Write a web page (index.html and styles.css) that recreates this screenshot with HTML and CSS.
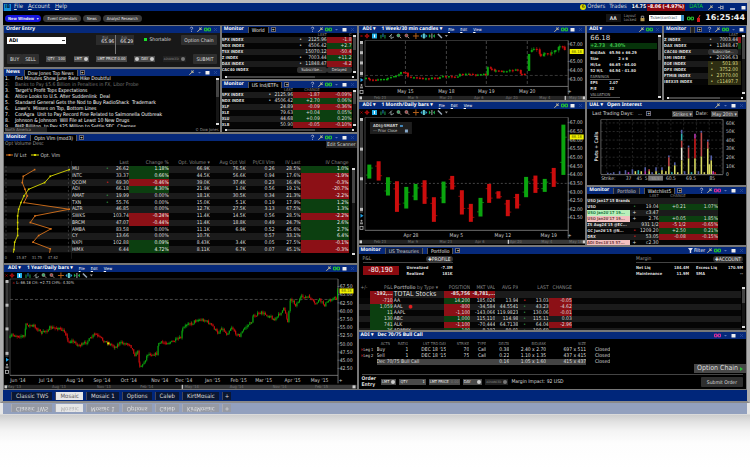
FILE: index.html
```html
<!DOCTYPE html>
<html lang="en">
<head>
<meta charset="utf-8">
<title>Mosaic</title>
<link rel="stylesheet" href="styles.css">
</head>
<body>
<div class="window">
  <header class="titlebar">
    <span class="logo">IB</span>
    <nav class="menu"><a href="#"><u>F</u>ile</a><a href="#"><u>A</u>ccount</a><a href="#"><u>H</u>elp</a></nav>
    <div class="status">
      <span class="count">6</span><a href="#">Orders</a><a href="#">Trades</a>
      <span class="pl"><b>14.75</b><b class="loss">-8.06 (-4.97%)</b></span>
      <span class="data">DATA</span>
      <span class="tools" data-tools="w p n m"></span>
    </div>
  </header>
  <div class="toolbar">
    <button class="pill primary">New Window &nbsp;▾</button><button class="pill">Event Calendars</button><button class="pill">News</button><button class="pill">Analyst Research</button>
    <div class="toolbar-right">
      <button class="aa">AA</button>
      <span class="layout">Layout<br>Locked</span>
      <span class="tools" data-tools="k"></span>
      <input class="search" aria-label="Ticker or contract" value="Ticker/contract">
      <span class="tools" data-tools="l a"></span>
      <time class="clock">16:25:44</time>
    </div>
  </div>

  <main class="workspace">
    <div class="col">
      <div class="split entry-row">
        <div class="col">
          <section class="panel order">
            <div class="head"><h2>Order Entry</h2><span class="tools" data-tools="q w l x"></span></div>
            <div class="body order-body">
              <div class="line">
                <select class="symbol" aria-label="Symbol"><option>ADI</option></select>
                <div class="quote"><span><i>Bid</i>65.96</span><span><i>Ask</i>66.29</span></div>
                <span class="short"><i></i>Shortable</span>
                <button class="btn">Option Chain</button>
              </div>
              <div class="line low">
                <span class="side"><button class="btn">BUY</button><button class="btn">SELL</button></span>
                <button class="chip">QTY &nbsp; 100</button><button class="chip">LMT <i></i></button><button class="chip">LMT PRICE 0.00</button><button class="chip"><i></i> DAY <i></i></button><button class="chip tiny">ADVANCED <i></i></button>
                <button class="btn">SUBMIT</button>
              </div>
            </div>
          </section>
          <section class="panel grow">
            <div class="head"><h2>News</h2><button class="tab on">Dow Jones Top News</button><button class="plus">+</button><span class="tools" data-tools="w d m x"></span></div>
            <div class="body scroller news-body">
              <ol class="news">
                <li>Fed Minutes Show June Rate Hike Doubtful</li>
                <li class="read">Banks to Pay $5.6 Billion in Penalties in FX, Libor Probe</li>
                <li>Target's Profit Tops Expectations</li>
                <li>Altice Looks to U.S. After Suddenlink&nbsp; Deal</li>
                <li>Standard General Gets the Nod to Buy RadioShack&nbsp; Trademark</li>
                <li>Lowe's&nbsp; Misses on Top, Bottom Lines</li>
                <li>ConAgra&nbsp; Unit to Pay Record Fine Related to Salmonella Outbreak</li>
                <li>Johnson &amp; Johnson&nbsp; Will File at Least 10 New Drugs</li>
                <li>BHP Billiton&nbsp; to Pay $25 Million to Settle SEC&nbsp; Charges</li>
              </ol>
              <div class="vbar"></div>
            </div>
            <div class="newsfoot"><select aria-label="Region"><option>North America</option></select><span>© Dow Jones</span></div>
          </section>
        </div>
        <div class="col">
          <section class="panel world">
            <div class="head"><h2>Monitor</h2><button class="tab on">World</button><button class="plus">+</button><span class="tools" data-tools="q w l d m x"></span></div>
            <div class="body scroller"><table id="world" class="small"></table><div class="vbar"></div></div>
            <div class="hbar"></div>
          </section>
          <section class="panel grow">
            <div class="head"><h2>Monitor</h2><button class="tab on">US Ind/ETFs</button><button class="plus">+</button><span class="tools" data-tools="q w l d m x"></span></div>
            <div class="body scroller"><table id="us" class="small"></table><div class="vbar"></div></div>
            <div class="hbar"></div>
          </section>
        </div>
      </div>

      <section class="panel scan">
        <div class="head"><h2>Monitor</h2><button class="tab on">Optn Vlm (mod3)</button><button class="plus">+</button><span class="tools" data-tools="q w l d m x"></span></div>
        <div class="scan-top"><span>Opt Volume Desc</span><button class="edit">Edit Scanner</button></div>
        <div class="body scan-body">
          <svg id="scanChart" viewBox="4 149 68 114"></svg>
          <div class="scroller"><table id="scan"></table><div class="vbar"></div></div>
        </div>
      </section>

      <section class="panel grow">
        <div class="head chart-head"><h2>ADI ▾</h2><h2>1 Year/Daily bars ▾</h2><a href="#"><u>F</u>ile</a><a href="#"><u>E</u>dit</a><a href="#"><u>V</u>iew</a><span class="tools" data-tools="w l m x"></span></div>
        <svg id="year" viewBox="4 272 353 117"></svg>
      </section>
    </div>

    <div class="col">
      <div class="split market-row">
        <div class="col">
          <section class="panel top">
            <div class="head chart-head"><h2>ADI ▾</h2><h2>1 Week/30 min candles ▾</h2><a href="#"><u>F</u>ile</a><a href="#"><u>E</u>dit</a><a href="#"><u>V</u>iew</a><span class="tools" data-tools="w l m x"></span></div>
            <svg id="week" viewBox="359 33 227 67"></svg>
          </section>
          <section class="panel grow">
            <div class="head chart-head"><h2>ADI ▾</h2><h2>1 Month/Daily bars ▾</h2><a href="#"><u>F</u>ile</a><a href="#"><u>E</u>dit</a><a href="#"><u>V</u>iew</a><span class="tools" data-tools="w l m x"></span></div>
            <svg id="month" viewBox="359 109 227 136"></svg>
          </section>
        </div>
        <div class="col">
          <div class="split quote-row top">
            <section class="panel">
              <div class="head"><h2>ADI ▾</h2><span class="tools" data-tools="w l x"></span></div>
              <div class="body scroller">
                <dl class="facts">
                  <div class="price">66.18</div>
                  <div class="gain">+2.73 &nbsp; 4.30%</div>
                  <div><dt>Bid/Ask</dt><dd>65.96 x 66.29</dd></div>
                  <div><dt>Size</dt><dd class="mid">2 x 6</dd></div>
                  <div><dt>Hi/Lo</dt><dd>66.65 - 64.00</dd></div>
                  <div><dt>52 H/L</dt><dd>64.94 - 41.80</dd></div>
                  <div class="sub">EARNINGS</div>
                  <div><dt>EPS</dt><dd>2.07</dd></div>
                  <div><dt>P/E</dt><dd>32</dd></div>
                  <div class="sub">VALUATION</div>
                </dl>
                <div class="vbar"></div>
              </div>
            </section>
            <section class="panel">
              <div class="head"><h2>Monitor</h2><button class="tab on slim" aria-label="Tab"></button><button class="plus">+</button><span class="tools" data-tools="q w l d m"></span></div>
              <div class="body scroller"><table id="index" class="small"></table><div class="vbar"></div></div>
              <div class="hbar"></div>
            </section>
          </div>
          <section class="panel oi">
            <div class="head"><h2>UAL ▾</h2><h2>Open Interest</h2><span class="tools" data-tools="w d m x"></span></div>
            <div class="oi-bar"><span>Last Trading Days: &nbsp; ...</span><button class="plus">+</button><span class="picks"><select aria-label="View"><option>Strikes ▾</option></select><label for="date">Date:</label><select id="date"><option>May 20th ▾</option></select></span></div>
            <svg id="open" viewBox="588 117 159 68"></svg>
          </section>
          <section class="panel grow">
            <div class="head"><h2>Monitor</h2><button class="tab">Portfolio</button><button class="tab on">Watchlist5</button><button class="plus">+</button><span class="tools" data-tools="q w L d m x"></span></div>
            <div class="body watch-body"><table id="watch" class="small"></table></div>
          </section>
        </div>
      </div>

      <section class="panel folio">
        <div class="head"><h2>Monitor</h2><button class="tab">US Treasuries</button><button class="tab on">Portfolio</button><button class="plus">+</button><span class="tools" data-tools="f w l d m x"></span></div>
        <div class="account">
          <div class="acct pnl">
            <div class="acct-head"><span>P&amp;L</span><button>✚PROFILE</button></div>
            <div class="acct-row"><strong>-80,190</strong><dl><dt>Unrealized</dt><dd>-7.3M</dd><dt>Realized</dt><dd>181K</dd></dl></div>
          </div>
          <div class="acct margin">
            <div class="acct-head"><span>Margin</span><button>✚ACCOUNT</button></div>
            <dl class="four"><dt>Net Liq</dt><dd>184.4M</dd><dt>Excess Liq</dt><dd>170.9M</dd><dt>Maintenance</dt><dd>11.9M</dd><dt>SMA</dt><dd>--</dd></dl>
          </div>
        </div>
        <div class="body scroller"><table id="folio"></table><div class="vbar"></div></div>
      </section>

      <section class="panel grow">
        <div class="head"><h2>ADI ▾</h2><h2>Dec 70/75 Bull Call</h2><span class="tools" data-tools="L d m x"></span></div>
        <div class="legs"><table id="legs"></table><button class="chain">Option Chain<i></i></button></div>
        <div class="submitrow">
          <b>Order<br>Entry</b>
          <button class="chip">LMT <i></i></button><button class="chip">QTY &nbsp; &nbsp; &nbsp; &nbsp; &nbsp; &nbsp; 1</button><button class="chip">LMT PRICE <s>0.00</s></button><button class="chip">DAY &nbsp; &nbsp; <i></i></button><button class="chip tiny">ADVANCED <i></i></button>
          <span>Margin Impact: 92 USD</span>
          <button class="btn">Submit Order</button>
        </div>
      </section>
    </div>
  </main>

  <nav class="pages">
    <button>Classic TWS</button><button class="on">Mosaic</button><button>Mosaic 1</button><button>Options</button><button>Caleb</button><button>KirtMosaic</button><button class="add">+</button>
  </nav>
</div>
<div class="reflection" aria-hidden="true"></div>
<script src="app.js"></script>
</body>
</html>
```
FILE: styles.css
```css
* { box-sizing: border-box; }
body {
  margin: 0;
  background: #fff;
  color: #ddd;
  font: 5px/6px "DejaVu Sans Condensed", "DejaVu Sans", sans-serif;
  text-rendering: geometricPrecision;
}
h2, dl, dd, ol { margin: 0; padding: 0; }
button, select, input {
  font: inherit;
  color: inherit;
  background: none;
  border: 0;
  margin: 0;
  padding: 0;
  appearance: none;
  white-space: nowrap;
}
a { color: inherit; text-decoration: none; }
svg { display: block; width: 100%; }
svg text { font-size: 5px; fill: #ccc; }

.window {
  border: 3px solid #aeaeae;
  border-top-color: #bcbcbc;
  border-bottom: 2px solid #8a8a8a;
  background: #000;
}
.titlebar {
  display: flex;
  align-items: center;
  height: 8px;
  background: #00267a;
  font-size: 6px;
  line-height: 8px;
}
.logo { background: #1590d8; color: #024; font-weight: bold; padding: 0 1px; margin: 0 3px 0 1px; font-size: 5px; line-height: 7px; }
.menu { display: flex; gap: 5px; }
.status { margin-left: auto; display: flex; align-items: center; gap: 4px; }
.count { width: 6px; height: 6px; border-radius: 3px; background: #dfe000; color: #000; font-size: 5px; line-height: 6px; text-align: center; margin-right: -3px; }
.pl { display: flex; font-size: 5px; color: #fff; }
.pl b { padding: 0 1px; line-height: 7px; background: #031b55; }
.pl .loss { background: #8f0a12; }
.data { color: #0ecb2c; }

.toolbar { display: flex; align-items: center; gap: 2px; height: 14px; padding: 0 2px; font-size: 4px; }
.pill { height: 7px; line-height: 7px; padding: 0 4px; border-radius: 4px; background: #3a3a3a; color: #eee; }
.pill.primary { background: #1616dd; font-weight: bold; padding: 0 3px; }
.toolbar-right { margin-left: auto; display: flex; align-items: center; gap: 3px; }
.aa { width: 15px; height: 8px; background: #151515; font-weight: bold; font-size: 5px; }
.layout { line-height: 4px; color: #999; }
.search { width: 35px; height: 6px; background: #fff; color: #345; padding: 0 1px; border-right: 3px solid #3b8fc0; }
.clock { font: bold 8px/10px "DejaVu Sans", sans-serif; color: #eee; }

.tools { margin-left: auto; display: flex; align-items: center; gap: 1px; }
.status .tools, .toolbar .tools { margin: 0; }
.status .tools { gap: 4px; }
.tools button { display: flex; height: 7px; line-height: 7px; }
.tools svg { width: 7px; height: 7px; }

.workspace {
  display: grid;
  grid-template-columns: 353fr 388fr;
  gap: 2px;
  padding: 1px;
  background: #777;
}
.col { display: flex; flex-direction: column; gap: 2px; min-width: 0; min-height: 0; }
.split { display: grid; gap: 2px; }
.entry-row { grid-template-columns: 216fr 135fr; height: 106px; }
.market-row { grid-template-columns: 227fr 159fr; grid-template-rows: 219px; }
.quote-row { grid-template-columns: 75fr 82fr; }
.panel { background: #000; overflow: hidden; display: flex; flex-direction: column; min-width: 0; min-height: 0; }
.grow { flex: 1; }
.top { height: 74px; flex: none; }
.order { height: 41px; }
.world { height: 53px; }
.scan { height: 129px; }
.oi { height: 83px; flex: none; }
.folio { height: 83px; }

.head { display: flex; align-items: center; gap: 4px; height: 7px; flex: none; padding: 0 1px 0 2px; background: #06297a; color: #fff; }
.head h2 { font: bold 5px/7px "Noto Sans", sans-serif; white-space: nowrap; }
.chart-head { padding-left: 4px; gap: 6px; font-size: 4px; }
.tab { height: 6px; line-height: 6px; padding: 0 3px; margin-top: 1px; background: #101c3c; border: solid #555; border-width: 0 1px; color: #ccc; font-size: 5px; }
.tab.on { background: #000; color: #eee; }
.tab.slim { width: 5px; padding: 0; background: #222; }
.plus { width: 5px; height: 5px; border: 1px solid #667; background: #000; color: #fff; font-size: 4px; line-height: 3px; margin-left: -2px; }

.body { flex: 1; min-height: 0; overflow: hidden; }
.scroller { display: flex; }
.scroller > :first-child { flex: 1; min-width: 0; }
.vbar { width: 3px; margin: 2px 1px; flex: none; background: linear-gradient(#ddd 2px, #444 2px 40%, #151515 40% calc(100% - 2px), #ddd calc(100% - 2px)); }
.hbar { height: 2px; flex: none; margin: 1px 3px; background: linear-gradient(90deg, #ddd 2px, #444 2px 70%, #151515 70% calc(100% - 2px), #ddd calc(100% - 2px)); }

.btn { height: 10px; padding: 0 3px; border-radius: 1px; background: #2f2f2f; }
.chip { display: inline-flex; align-items: center; gap: 2px; height: 6px; padding: 0 1px; background: #4a4a4a; color: #eee; font-size: 4px; }
.chip i { width: 4px; height: 4px; border-radius: 2px; background: #ccc; }
.chip.tiny { background: #222; color: #888; font-size: 3px; }
.chip.tiny i { background: #777; }
.chip s { color: #777; text-decoration: none; }
.order-body { background: #181818; padding: 2px 3px 3px; display: flex; flex-direction: column; justify-content: space-between; }
.line { display: flex; align-items: center; justify-content: space-between; }
.low { gap: 2px; }
.symbol { width: 59px; height: 7px; padding: 0 2px; color: #000; font-weight: bold; background: linear-gradient(#333, #333) 55px 3px / 3px 1px no-repeat, #fff; }
.quote { position: relative; display: flex; margin-left: 20px; background: #2b2b2b; }
.quote span { width: 19px; text-align: right; line-height: 5px; padding-right: 1px; color: #eee; }
.quote i { display: block; font-style: normal; font-size: 4px; line-height: 5px; color: #888; text-align: center; }
.quote::after { content: ""; position: absolute; left: 50%; top: 0; width: 1px; height: 19px; background: #777; }
.short i { display: inline-block; width: 3px; height: 3px; background: #1adf2a; margin-right: 2px; }
.side { display: flex; }

.news { list-style: none; counter-reset: n; line-height: 6px; white-space: nowrap; overflow: hidden; color: #fff; }
.news li { counter-increment: n; }
.news li::before { content: counter(n) "."; display: inline-block; width: 10px; padding-left: 1px; }
.news .read { color: #777; }
.newsfoot { display: flex; justify-content: space-between; height: 5px; line-height: 5px; padding: 0 1px; font-size: 4px; color: #999; }
.newsfoot select { width: 42px; height: 5px; background: #222; }

table { width: 100%; border-collapse: collapse; table-layout: fixed; line-height: 6px; }
.scroller > table { align-self: flex-start; }
th { font-weight: normal; color: #888; }
th, td { padding: 0; text-align: right; white-space: nowrap; overflow: hidden; height: 6px; }
tbody tr:nth-child(odd) { background: #1b1b1b; }
tbody tr:nth-child(even) { background: #050505; }
.l { text-align: left; }
.c { text-align: center; }
.g { background: #0c3f10; }
.r { background: #8c1016; }
.small th { height: 4px; line-height: 4px; font-size: 4px; }
.small .l { font-size: 4px; font-weight: bold; }
.mint { background: #b9f0bb; color: #274; }
.rose { background: #f4c0c0; color: #744; }
.olive { background: #2e2e12; color: #dd8; }
.box { background: #333; border-radius: 2px; text-align: center; font-size: 4px; }
.up { color: #3a9a4a; }
.down { color: #e02020; }

.scan-top { display: flex; justify-content: space-between; height: 7px; line-height: 7px; padding-left: 1px; color: #999; }
.edit { padding: 0 1px; background: #262626; color: #ddd; }
.scan-body { display: grid; grid-template-columns: 68fr 285fr; }
.scan-body .scroller { padding-top: 12px; }
#scan { height: 93px; }
#scan .g, #scan .r { color: #eee; }
.scan-body .vbar { margin: 8px 2px 8px 3px; }

.facts { padding-left: 3px; line-height: 6px; overflow: hidden; }
.facts div { display: flex; height: 6px; font-size: 4px; font-weight: bold; }
.facts dt { width: 19px; }
.facts .mid { padding-left: 9px; }
.facts .price { height: 9px; font: 7px/11px "DejaVu Sans", sans-serif; }
.facts .gain { background: #06330a; color: #3fbf4a; font-size: 5px; margin: 1px 0; }
.facts .sub { width: 30px; font-weight: normal; color: #aaa; border-bottom: 1px solid #555; }

.oi-bar { display: flex; align-items: center; gap: 6px; height: 9px; flex: none; padding: 0 8px 0 5px; }
.picks { margin-left: auto; display: flex; gap: 3px; }
.picks select { background: #444; padding: 0 1px; }
.watch-body { padding-right: 28px; }

.account { display: flex; justify-content: space-between; flex: none; height: 31px; padding: 2px 3px 0 4px; font-size: 4px; line-height: 6px; }
.pnl { width: 90px; }
.margin { width: 107px; }
.acct-head { display: flex; justify-content: space-between; height: 7px; border-bottom: 1px solid #444; color: #999; font-size: 5px; }
.acct-head button { height: 6px; line-height: 6px; background: #333; border-radius: 3px; padding: 0 2px; color: #eee; }
.acct-row { display: flex; justify-content: space-between; padding-top: 2px; }
.acct-row strong { width: 36px; height: 9px; margin-top: 1px; background: #8c0a10; color: #fff; font: 7px/9px "DejaVu Sans Condensed", sans-serif; text-align: center; }
.acct dl { display: grid; grid-template-columns: 32px 14px; font-weight: bold; }
.acct dd { text-align: right; }
.acct .four { grid-template-columns: 31fr 20fr 32fr 20fr; padding-top: 2px; }
.four dt:nth-of-type(even) { padding-left: 7px; }
#folio .l { padding-left: 1px; }
#folio .big td { font-size: 7px; height: 7px; line-height: 7px; }
#folio .big .r { font-size: 5px; font-weight: bold; }
#folio .sp { background: #000; }

.legs { position: relative; flex: none; padding: 2px 0 0 2px; height: 34px; }
#legs tr { background: none; }
#legs tr:last-child td:not(:last-child):not(:first-child) { background: #444; }
#legs th, #legs .leg { font-size: 4px; text-align: left; }
#legs th { text-align: right; }
.chain { position: absolute; right: 0; bottom: 0; height: 9px; padding: 0 3px; display: flex; align-items: center; gap: 2px; background: #484848; font: 7px/9px "DejaVu Sans Condensed", sans-serif; }
.chain i { border: solid transparent; border-width: 2px 0 2px 3px; border-left-color: #2fbf3a; }
.submitrow { display: flex; align-items: center; gap: 3px; margin: 1px 3px 0; border-top: 1px solid #444; height: 15px; line-height: 6px; }
.submitrow .btn { margin-left: auto; padding: 0 6px; }
.submitrow b { margin-right: 2px; }

.pages { display: flex; align-items: center; gap: 3px; height: 11px; padding-left: 8px; background: #00267a; font-size: 6px; }
.pages > * { height: 8px; line-height: 8px; padding: 0 4px; background: #0a1633; border-left: 1px solid #445; color: #ddd; }
.pages .on { background: #e6e6e6; color: #555; }
.pages .add { padding: 0 2px; }

.reflection { padding: 0 3px; height: 65px; background: linear-gradient(#e6e6e6 0, #e6e6e6 11px, #cdcdcd 12px, #e2e2e2 19px, #f4f4f4 28px, #fdfdfd 40px, #fff); }
.reflection .pages { transform: scaleY(-1); opacity: .36; filter: blur(.5px); }
```
FILE: app.js
```js
/* Toolbar glyphs, each drawn in a 7 x 7 box */
const glyphs = {
  q: ['Help', '<path d="M2.3 2.4Q2.5 1.2 3.6 1.2Q4.9 1.3 4.7 2.4Q3.6 3.3 3.5 4.3M3.5 5.2V6" stroke="#ccd" fill="none" stroke-width=".8"/>'],
  w: ['Settings', '<path d="M1.4 5.8L4.4 2.8M3.8 1.4L4 3.1L5.8 3.3M4.4 2.8L5.5 1.5" stroke="#ccc098" stroke-width="1" fill="none"/>'],
  l: ['Link group', '<path d="M.5 2.2H3V4.8H.5ZM4 2.2H6.5V4.8H4ZM2.5 3.5H4.5" stroke="#27c832" fill="none"/>'],
  L: ['Link group', '<path d="M.5 2.2H3V4.8H.5ZM4 2.2H6.5V4.8H4ZM2.5 3.5H4.5" stroke="#e0309a" fill="none"/>'],
  d: ['Menu', '<path d="M2 3H5L3.5 4.6Z" fill="#5d77b8"/>'],
  m: ['Maximize', '<path d="M1.5 2H5.5V5.5H1.5Z" fill="#eee"/>'],
  n: ['Minimize', '<path d="M1 5H6" stroke="#fff" stroke-width="1.2"/>'],
  x: ['Close', '<path d="M2 2L5 5M5 2L2 5" stroke="#31509b" stroke-width=".7"/>'],
  p: ['Pin', '<path d="M0 3.5H2M2.5 1.5V5.5M2.5 2.5H5V4.5H2.5M5 1.5V5.5" stroke="#8a94b0" fill="none"/>'],
  f: ['Filter', '<path d="M1 1H6L4.2 3.5V6H2.8V3.5Z" fill="#dde"/>', 'Filter'],
  k: ['Locked', '<path d="M1.5 3H5.5V6.2H1.5Z" fill="#b89a50"/><path d="M2.3 3V1.2H4.7V3" stroke="#aaa" fill="none" stroke-width=".8"/>'],
  a: ['Alerts', '<path d="M2 3H5V7H2Z" fill="#d01818"/><path d="M5 0L3.5 3" stroke="#e33"/>']
};
document.querySelectorAll('[data-tools]').forEach(el => {
  el.innerHTML = el.dataset.tools.split(' ').map(k =>
    `<button aria-label="${glyphs[k][0]}"><svg viewBox="0 0 7 7">${glyphs[k][1]}</svg>${glyphs[k][2] || ''}</button>`).join('');
});

/* Tables: a cell is "text|classes|colspan" */
function table(id, cols, head, rows) {
  const sum = cols.reduce((a, b) => a + b, 0);
  const cell = (tag, c) => { const [t, k, n] = c.split('|'); return `<${tag}${k ? ` class="${k}"` : ''}${n ? ` colspan="${n}"` : ''}>${t}</${tag}>`; };
  document.getElementById(id).innerHTML =
    '<colgroup>' + cols.map(w => `<col style="width:${(w / sum * 100).toFixed(2)}%">`).join('') + '</colgroup>' +
    '<thead><tr>' + head.map(c => cell('th', c)).join('') + '</tr></thead><tbody>' +
    rows.map(r => `<tr${r.big ? ' class="big"' : ''}>` + r.map(c => cell('td', c)).join('') + '</tr>').join('') + '</tbody>';
}
const D = '•|c', U = '•|c up', R = '•|c down';
table('world', [76, 7, 23, 25], ['', '', 'LAST', 'C'], [
  ['SPX INDEX|l', D, '2125.96', '-1.8|r'], ['NDX INDEX|l', D, '4506.42', '+2.7|g'],
  ['TSX INDEX|l', '', '15070.12', '-50.4|r'], ['Z INDEX|l', D, '7003.44', '+11.2|g'],
  ['DAX INDEX|l', D, '11848.47', '-4.2|r'], ['CAC40 INDEX|l', 'Subscribe...|box|2', 'Delayed|box']]);
table('us', [46, 5, 21, 27, 32], ['', '', 'LAST', 'CHANGE', ''], [
  ['SPX INDEX|l', D, '2125.96', '-1.87|r', '-0.09%|r'], ['NDX INDEX|l', D, '4506.42', '+2.70|g', '0.06%|g'],
  ['XLF|l', '', '24.89', '-0.09|r', '-0.36%|r'], ['XLE|l', '', '79.63', '+0.04|g', '0.05%|g'],
  ['XLU|l', '', '44.68', '+0.09|g', '0.20%|g'], ['XLB|l', '', '50.90', '-0.05|r', '-0.10%|r']]);
table('index', [44, 5, 25, 3], ['', '', 'LAST', ''], [
  ['Z INDEX|l', D, '7003.44', '|r'], ['DAX INDEX|l', D, '11848.47', '|g'], ['CAC40 INDEX|l', 'Subscribe...|box|2', ''],
  ['SMI INDEX|l', D, '20296.63', ''], ['EOE INDEX|l', '•|olive', '501.93|olive', '|olive'], ['DFX INDEX|l', '•|olive', '3752.00|olive', '|olive'],
  ['FTMIB INDEX|l', '•|olive', '23770.00|olive', '|olive'], ['IBEX35 INDEX|l', '•|olive', 'c11497.7|olive', '|olive']]);
table('watch', [43, 8, 20, 27, 32], ['', '', 'LAST', 'CHANGE', ''], [
  ["USO Jan17'15 Brands|l", '', '', '', ''], ['USO|l', U, '19.04', '+0.21|g', '1.07%|g'],
  ["USO Jan20'17 19...|l mint", '+|c', 'c3.47', '', ''], ["USO Jan20'17 19...|l rose", '+|c', '2.76', '+0.05|g', '1.85%|g'],
  ["ZS Aug24'15 @EC...|l", '', '931 1/2', '-5 1/2|r', '-0.65%|r'], ["GC Jun26'15 @N...|l", R, '1209.20', '+2.50|g', '0.21%|g'],
  ['DRX|l', R, '53.05', '-0.08|r', '-0.15%|r'], ["ADI Dec18'15 57...|l rose", '+|c', 'c2.30', '', '']]);
const scan = [
  ['MU', U, '26.62', '1.18%', '66.9K', '76.5K', '0.26', '28.5%', '1.0%'], ['INTC', '', '33.37', '0.66%', '44.5K', '56.6K', '0.94', '17.6%', '-1.9%'],
  ['QCOM', R, '69.30', '-0.46%', '39.0K', '37.4K', '0.23', '16.4%', '-0.3%'], ['ADI', '', '66.18', '4.30%', '21.9K', '1.0K', '0.56', '19.1%', '-20.7%'],
  ['AMAT', U, '19.99', '0.00%', '18.1K', '30.5K', '0.34', '21.3%', '-2.2%'], ['TXN', U, '55.76', '0.00%', '15.0K', '5.1K', '0.19', '17.9%', '1.2%'],
  ['ALTR', '', '46.85', '0.00%', '12.7K', '27.5K', '3.13', '67.5%', '1.3%'], ['SWKS', '', '103.74', '-0.24%', '11.4K', '14.5K', '0.56', '28.5%', '-2.2%'],
  ['BRCM', '', '47.07', '-0.44%', '11.4K', '18.8K', '0.49', '24.7%', '2.6%'], ['AMBA', '', '83.58', '0.00%', '11.1K', '6.9K', '0.52', '45.6%', '2.7%'],
  ['CY', '', '13.66', '0.00%', '10.7K', '', '0.57', '33.1%', '6.4%'], ['NXPI', '', '102.88', '0.09%', '8.43K', '3.4K', '0.05', '27.5%', '-0.1%'],
  ['HIMX', '', '6.44', '4.72%', '8.11K', '6.7K', '0.07', '45.1%', '-0.3%']];
const tone = v => v[0] === '-' ? v + '|r' : v === '0.00%' ? v : v + '|g';
table('scan', [33, 5, 19, 40, 41, 36, 29, 26, 48], ['', '', 'Last', 'Change %', 'Opt. Volume ▾', 'Avg Opt Vol', 'Pt/Cll Vlm', 'IV Last', 'IV Change'],
  scan.map(r => [r[0] + '|l', r[1], r[2], tone(r[3]), r[4], r[5], r[6], r[7], tone(r[8])]));
const total = ['|sp', '-192,...|r', 'TOTAL Stocks|l', '-85,756|r', '-8,781,...|r', '', '', '', '', ''];
total.big = true;
table('folio', [11, 23, 51, 26, 25, 23, 12, 18, 23, 168], ['+/-|c', 'P&amp;L', '<b>Portfolio</b> by Type ▾|l', 'POSITION', 'MKT VAL', 'AVG PX', '', 'LAST', 'CHANGE', ''], [
  total,
  ['', '-710|r', 'AA|l', '14,200|g', '185,026', '13.94', R, '13.03', '-0.05|r', ''],
  ['', '1,059|g', 'AAL &nbsp; &nbsp;<span class="down">●</span>|l', '-800|r', '-34,584', '44.5541', U, '43.23', '-4.62|r', ''],
  ['', '11|g', 'AAPL|l', '-1,100|r', '-143,066', '119.9823', U, '130.06', '-0.01|r', ''],
  ['', '130|g', 'ABC|l', '1,000|g', '115,110', '114.98', U, '115.11', '0.03', ''],
  ['', '741|g', 'ALK|l', '-1,100|r', '-70,444', '64.7138', U, '64.04', '-2.96|r', ''],
  ['', '36|g', 'ADMMY|l', '100|g', '8,192', '80.01', U, '100.60', '', '']]);
table('legs', [16, 14, 18, 38, 23, 17, 23, 37, 40, 24, 136], ['', 'ACTN', 'RATIO', 'LST TRD DAY', 'STRIKE', 'TYPE', 'DELTA', 'BID/ASK', 'SIZE', '', ''], [
  ['<span class="down">✕</span>Leg 1|leg', 'Buy|l', '1', "DEC 18 '15", '70', 'Call', '0.38', '2.40 x 2.70', '697 x 511', 'Closed', ''],
  ['<span class="down">✕</span>Leg 2|leg', 'Sell|l', '1', "DEC 18 '15", '75', 'Call', '0.22', '1.10 x 1.35', '437 x 415', 'Closed', '']]);
document.querySelector('#legs tbody').insertAdjacentHTML('beforeend',
  '<tr><td></td><td class="l" colspan="5">Dec 70/75 Bull Call</td><td>0.16</td><td>1.05 x 1.60</td><td>415 x 437</td><td>Closed</td></tr>');

/* Charts */
const GREEN = '#0ba50f', RED = '#cc0d0d';
const line = (x1, y1, x2, y2, c, w = 1, dash = '') =>
  `<line x1="${x1}" y1="${y1}" x2="${x2}" y2="${y2}" stroke="${c}" stroke-width="${w}"${dash ? ` stroke-dasharray="${dash}"` : ''}/>`;
const rect = (x, y, w, h, c) => `<rect x="${x}" y="${y}" width="${w}" height="${h}" fill="${c}"/>`;
const text = (x, y, t, a = 'middle', s = 5, c = '#ccc') =>
  `<text x="${x}" y="${y + s * .36}" text-anchor="${a}" style="font-size:${s}px;fill:${c}">${t}</text>`;
const lens = (x, y, c) => `<circle cx="${x - .5}" cy="${y - .5}" r="1.5" fill="${c}" stroke="#aaa" stroke-width=".6"/>` + line(x + .7, y + .7, x + 2.2, y + 2.2, '#b98', 1);

function chartTools(x, y) {
  const p = d => `<path d="${d}"`;
  return line(x + 1.5, y - 1, x + 3.5, y + 1, '#b00', .7) + line(x + 3.5, y - 1, x + 1.5, y + 1, '#b00', .7) +
    `<circle cx="${x + 8}" cy="${y}" r="1.4" fill="none" stroke="#c11" stroke-width=".8"/>` + line(x + 5.5, y, x + 10.5, y, '#c11', .6) + line(x + 8, y - 2.5, x + 8, y + 2.5, '#c11', .6) +
    rect(x + 13, y - 2.5, 5, 5, '#25b0e8') + rect(x + 15, y - 1.5, 1, 3, '#fff') +
    line(x + 22, y - 1, x + 22, y + 2.5, '#1aa04a') + line(x + 24, y - 2.5, x + 24, y + 1, '#2585c8') + line(x + 26, y - 1, x + 26, y + 2.5, '#1aa04a') +
    p(`M${x + 30} ${y + 1}L${x + 33} ${y - 2}M${x + 32} ${y - 1}V${y + 2.5}L${x + 35} ${y + 1}`) + ' stroke="#bcc" stroke-width=".7" fill="none"/>' +
    lens(x + 40, y, '#3a6') + lens(x + 48, y, '#a44') +
    line(x + 54, y, x + 60, y, '#b5601a') + line(x + 57, y - 3, x + 57, y + 3, '#b5601a') +
    line(x + 65, y - 2.5, x + 65, y + 2.5, '#6cc', 2) + p(`M${x + 61.5} ${y}l2-2v4zM${x + 68.5} ${y}l-2-2v4z`) + ' fill="#2a9fd0"/>' +
    line(x + 73, y - 2.5, x + 73, y + 2.5, '#aaa') + p(`M${x + 72} ${y}l-2-2v4zM${x + 74} ${y}l2-2v4z`) + ' fill="#1bab4a"/>' +
    line(x + 79, y - 2, x + 83, y + 2, '#9ab', 1.5) + p(`M${x + 86} ${y - 1}h3l-1.5 2z`) + ' fill="#999"/>';
}
function slider(x, y0, y1) {
  let s = line(x, y0, x, y1 - 18, '#3a3a3a', 3);
  [0, .33, .66, 1].forEach(f => { s += rect(x - 1.5, y0 + (y1 - 22 - y0) * f - 1, 3, 3, '#bbb'); });
  return s + `<path d="M${x - 1} ${y1 - 17}l3 2l-3 2z" fill="#25a5e8"/>` +
    `<circle cx="${x}" cy="${y1 - 10}" r="1" fill="#aaa"/>` + rect(x - 1.5, y1 - 8.5, 3, 2, '#888') + `<rect x="${x - 1.5}" y="${y1 - 4.5}" width="3" height="3" fill="none" stroke="#bbb" stroke-width=".8"/>`;
}
function strip(x, y, w, thumb, labels) {
  return rect(x, y, w, 4, '#242424') + rect(thumb, y, x + w - thumb, 4, '#3a3a3a') + rect(thumb, y, 1, 4, '#eee') +
    rect(x + .5, y + .5, 2.5, 3, '#ccc') + rect(x + w - 4, y + .5, 3, 3, '#ccc') + labels.map(([p, t]) => text(p, y + 2, t, 'middle', 4, '#777')).join('');
}
const tag = (x, y) => rect(x, y - 2.5, 14, 5, '#f2f200') + text(x + 7, y, '66.18', 'middle', 4, '#660');
const axes = (l, t, r, b) => line(l, t, r, t, '#555', .6) + line(l, t, l, b, '#777', .6) + line(l, b, r, b, '#888', .8) + line(r, t, r, b + 8, '#888', .8);
function walk(points, step, width, spread) {
  let out = '', prev = points[0][1], seed = 7;
  const rnd = () => (seed = seed * 16807 % 2147483647) / 2147483647;
  for (let i = 0; i < points.length - 1; i++) {
    const [xa, ya] = points[i], [xb, yb] = points[i + 1];
    for (let x = xa; x < xb; x += step) {
      const y = ya + (yb - ya) * (x - xa) / (xb - xa) + (rnd() - .5) * spread;
      const c = y < prev ? GREEN : RED, top = Math.min(y, prev), h = Math.max(Math.abs(y - prev), 1.2);
      out += rect(x - width / 2, top, width, h, c) + line(x, top - rnd() * spread * .6, x, top + h + rnd() * spread * .6, c, .6);
      prev = y;
    }
  }
  return out;
}
const pairs = s => s.split(' ').map(p => p.split(',').map(Number));

let s = chartTools(4, 275.5) + axes(10, 279, 338.5, 375.5) + line(10, 299.5, 338, 299.5, '#555', .8, '3 2') + slider(7, 281, 375);
['67.50', '65.00', '62.50', '60.00', '57.50', '55.00', '52.50', '50.00', '47.50', '45.00', '42.50'].forEach((t, i) => { s += text(353, 286.5 + 8.2 * i, t, 'end') + line(338, 286.5 + 8.2 * i, 340, 286.5 + 8.2 * i, '#888', .6); });
s += tag(340, 291) + text(12, 283, '<tspan fill="#c22">×</tspan> L: 66.18 CH: +2.73 CH%: 4.30%', 'start', 4);
[[18, "Jun '14"], [46, "Jul '14"], [75, "Aug '14"], [102, "Sep '14"], [129, "Oct '14"], [160, "Nov '14"], [184, "Dec '14"], [213, "Jan '15"], [239, "Feb '15"], [264, "Mar '15"], [293, "Apr '15"], [320, "May '15"], [341, '+']].forEach(([x, t]) => { s += text(x, 380, t); });
s += strip(4, 385, 353, 182, [[14, "May '13"], [59, "Aug '13"], [104, "Nov '13"], [147, "Feb '14"], [192, "May '14"], [237, "Aug '14"], [280, "Nov '14"], [322, "Feb '15"]]);
s += walk(pairs('10,338 12,335 24,336 26,325 34,326 42,333 50,328 58,328 66,333 68,342 72,341 78,345 82,345 88,341 95,334 104,341 108,343 115,347 120,343 130,344 135,355 138,352 140,366 143,365 148,354 157,354 159,343 172,342 181,338 183,329 189,322 192,324 196,320 205,320 212,325 218,333 222,328 227,334 232,327 236,333 240,336 245,328 252,322 254,315 262,313 270,316 275,320 284,309 286,313 288,321 291,298 296,305 302,297 310,297 315,304 320,300 325,305 331,299 337,298 338,290 339,288'), 1.3, 1, 3);
s += rect(107.5, 342.5, 2, 2, '#ee0');
document.getElementById('year').innerHTML = s;

s = chartTools(359, 36) + axes(365, 40.5, 568.5, 86.5) + slider(361.5, 42, 95);
[405.5, 446.5, 486.5, 527.5].forEach((x, i) => { s += line(x, 41, x, 86, '#555', .8, '3 2') + text(x, 91, ['May 15', 'May 18', 'May 19', 'May 20'][i]); });
s += line(365, 75.5, 568, 75.5, '#444', .8, '3 2');
[['67.00', 44], ['65.00', 61.5], ['64.00', 70], ['63.00', 79]].forEach(([t, y]) => { s += text(583, y, t, 'end') + line(568, y, 570, y, '#888', .6); });
s += tag(570, 51.5) + text(570, 91, '+') + strip(359, 96, 228, 565, [[380, 'Feb 23'], [413, 'Mar 9'], [446, 'Mar 23'], [479, 'Apr 6'], [512, 'Apr 20'], [545, 'May 4'], [576, 'May 18']]);
s += walk(pairs('366,79 370,80 378,79 388,78 396,76 401,73 406,72 408,77 420,78.5 440,78 446,76 452,76 458,77.5 460,75 470,74 478,74.5 486,75 488,68 492,68.5 496,71 504,71 518,70 522,74 527,75'), 3, 2, 2);
s += rect(528, 54, 2.5, 17, GREEN);
s += walk(pairs('532,52 534,50 537,50 541,55 545,52.5 552,52 556,51 560,46 565,50 568,51'), 3, 2, 4);
document.getElementById('week').innerHTML = s;

s = chartTools(359, 112.5) + axes(365, 117.5, 568.5, 230.5) + slider(361.5, 119, 231) + line(365, 183.5, 568, 183.5, '#555', .8, '2 2');
['67.00', '66.50', '66.00', '65.50', '65.00', '64.50', '64.00', '63.50', '63.00', '62.50', '62.00', '61.50'].forEach((t, i) => { const y = 122.7 + 8.65 * i; s += text(583, y, t, 'end') + line(568, y, 570, y, '#888', .6); });
s += tag(570, 137) + text(570, 235, '+') + rect(370, 122, 42, 12, '#1e1e1e') + text(373, 126, '<tspan font-weight="bold">ADI@SMART</tspan>', 'start', 4) + text(373, 131, '--- Prior Close', 'start', 4) + rect(405, 129.5, 3, 3, '#8ac') + rect(400, 125, 3, 2, '#48b');
[[411, 'Apr 28'], [456.5, 'May 5'], [503, 'May 12'], [549, 'May 19']].forEach(([x, t]) => { s += text(x, 235, t); });
s += strip(359, 240, 228, 508, [[380, 'Feb 23'], [413, 'Mar 9'], [446, 'Mar 23'], [480, 'Apr 6'], [516, 'Apr 20'], [547, 'May 4'], [576, 'May 18']]);
[[43, 200, 242, 1], [71, 190, 248, 0], [99, 238, 293, 1], [126, 250, 342, 0], [154, 267, 332, 1], [182, 258, 307, 1], [209, 247, 318, 0], [237, 298, 372, 0], [266, 251, 316, 1], [292, 234, 275, 0], [321, 277, 350, 0], [348, 318, 372, 0], [377, 300, 356, 1], [403, 258, 315, 0], [431, 280, 302, 0], [459, 306, 355, 0], [487, 288, 332, 0], [514, 237, 298, 1], [542, 233, 285, 0], [570, 243, 282, 1], [597, 210, 267, 0], [626, 80, 231, 1]].forEach(([x, a, b, up]) => {
  const X = 355 + x / 3, A = 98 + a / 3, B = 98 + b / 3, c = up ? GREEN : RED, q = (B - A) / 4;
  s += rect(X - 2, A, 4, B - A, c) + line(X - 3.5, up ? B - q : A + q, X, up ? B - q : A + q, c, .7) + line(X, up ? A + q : B - q, X + 3.5, up ? A + q : B - q, c, .7);
});
document.getElementById('month').innerHTML = s;

s = '';
for (let i = 0; i < 7; i++) s += line(601, 122 + i * 8.7, 725, 122 + i * 8.7, '#444', .6, '2 2') + text(728, 122 + i * 8.7, i < 6 ? (60 - i * 10) + 'K' : '0', 'start');
for (let x = 607; x < 725; x += 13) s += line(x, 118.5, x, 174, '#3a3a3a', .6, '2 2');
s += line(601, 118.5, 725, 118.5, '#777', .6) + line(601, 118.5, 601, 174, '#777', .8) + line(725, 118.5, 725, 174, '#777', .8) + line(601, 174.5, 725, 174.5, '#888', .8);
const Y = '#d8d860', B = '#5560a8', P = '#b83ab0', T = '#c04848', C = '#30b0b0', K = '#d01c1c';
[[608, 172.5, B], [611, 173, B], [614, 172, B], [620, 171, B], [626, 170, B], [629, 172, P], [633, 169, B], [636, 171, Y], [639, 170, C], [642, 171, Y], [646, 167, B, 171, P], [650, 169, T, 171, Y], [653, 172, B], [657, 167, B, 171, Y], [660, 173, C], [663, 167, B, 170, Y], [667, 171, Y], [670, 155, B, 157, T, 166, Y], [673, 172, C], [676, 162, B, 165, Y], [679, 172, Y], [683, 129, B, 133, C, 140, T, 147, '#eed', 160, Y], [686, 171, B], [690, 145, B, 147, T, 158, Y], [693, 172, C], [696.5, 133, P, 138, K, 158, Y], [700, 171, B], [703, 130, B, 132, T, 156, Y], [706, 172, Y], [709.5, 139, B, 141, T, 148, Y], [713, 155, B, 160, Y], [711, 164, Y], [715, 171, P], [717, 172, K]].forEach(a => {
  for (let i = 1; i < a.length; i += 2) s += rect(a[0] - .8, a[i], 1.6, (a[i + 2] || 174) - a[i], a[i + 1]);
});
s += rect(649, 175.5, 15, 5, '#777') + text(656.5, 178.5, '55.5', 'middle', 4, '#aaa');
[[608.5, 'Strike:'], [629, '37'], [640, '45'], [647, '5'], [672, '60.5'], [692.5, '69.5'], [714, '85']].forEach(([x, t]) => { s += text(x, 178.5, t); });
s += '<text transform="translate(598.5 146) rotate(-90)" text-anchor="middle" font-weight="bold">Puts + Calls</text>';
document.getElementById('open').innerHTML = s;

const poly = (zoomed, c) => {
  const pts = pairs(zoomed).map(([x, y]) => [x / 3, 130 + y / 3]);
  return `<polyline points="${pts.join(' ')}" fill="none" stroke="${c}" stroke-width=".9"/>` + pts.slice(0, 13).map(([x, y]) => rect(x - .8, y - .8, 1.6, 1.6, c)).join('');
};
s = '';
for (let i = 0; i < 13; i += 2) s += rect(4, 167.3 + i * 6.63, 68, 6.6, '#1b1b1b');
s += line(6, 167, 6, 254, '#555', .6, '2 2') + line(68.5, 167, 68.5, 254, '#555', .6, '2 2') + line(72, 162, 72, 260, '#444', .6);
s += poly('104,122 70,142 67,161 75,181 82,201 72,221 208,241 105,261 91,281 153,300 116,320 99,340 151,360 149,372', '#d8731c') +
  poly('208,122 151,142 134,161 86,181 72,201 63,221 56,241 53,261 53,281 53,300 53,320 44,340 42,362 40,372', '#d8d800');
s += line(6, 156, 13, 156, '#d8731c') + rect(8.5, 155, 2, 2, '#d8731c') + text(14, 156, 'IV Lst', 'start') + line(31, 156, 39, 156, '#d8d800') + rect(34, 155, 2, 2, '#d8d800') + text(40.5, 156, 'Opt. Vlm', 'start');
[[6, '0'], [21.5, '15.87'], [37, '31.75'], [53, '47.62']].forEach(([x, t]) => { s += text(x, 259, t, 'middle', 4, '#999'); });
document.getElementById('scanChart').innerHTML = s;

/* Floor reflection of the page tabs */
const mirror = document.createElement('div');
mirror.className = 'pages';
document.querySelectorAll('nav.pages button').forEach(b => {
  const tab = document.createElement('span');
  tab.className = b.className;
  tab.textContent = b.textContent;
  mirror.append(tab);
});
document.querySelector('.reflection').append(mirror);
```
